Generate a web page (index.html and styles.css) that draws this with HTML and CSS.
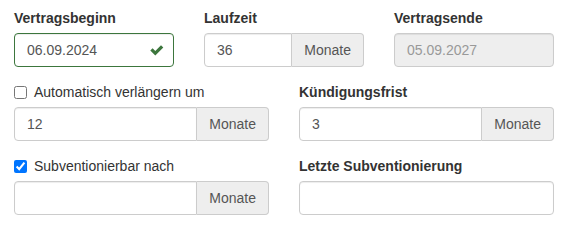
FILE: index.html
```html
<!DOCTYPE html>
<html lang="de">
<head>
<meta charset="utf-8">
<link rel="stylesheet" href="styles.css">
</head>
<body>
<form class="form">
  <div class="row row-3">
    <div class="group">
      <label class="label">Vertragsbeginn</label>
      <div class="field-wrap">
        <input class="control control-success" type="text" value="06.09.2024">
        <svg class="feedback" width="14" height="11" viewBox="0 0 14 11" aria-hidden="true">
          <path d="M0.3 5.6 L2.6 3.3 L5.3 6 L11 0.3 L13.3 2.6 L5.3 10.6 Z" fill="#3c763d"/>
        </svg>
      </div>
    </div>
    <div class="group">
      <label class="label">Laufzeit</label>
      <div class="input-group">
        <input class="control control-left" type="text" value="36">
        <span class="addon">Monate</span>
      </div>
    </div>
    <div class="group">
      <label class="label">Vertragsende</label>
      <input class="control control-disabled" type="text" value="05.09.2027" disabled>
    </div>
  </div>
  <div class="row row-2">
    <div class="group">
      <label class="check-label"><input class="check" type="checkbox"> Automatisch verlängern um</label>
      <div class="input-group">
        <input class="control control-left" type="text" value="12">
        <span class="addon">Monate</span>
      </div>
    </div>
    <div class="group">
      <label class="label">Kündigungsfrist</label>
      <div class="input-group">
        <input class="control control-left" type="text" value="3">
        <span class="addon">Monate</span>
      </div>
    </div>
  </div>
  <div class="row row-2">
    <div class="group">
      <label class="check-label"><input class="check" type="checkbox" checked> Subventionierbar nach</label>
      <div class="input-group">
        <input class="control control-left" type="text" value="">
        <span class="addon">Monate</span>
      </div>
    </div>
    <div class="group">
      <label class="label">Letzte Subventionierung</label>
      <input class="control" type="text" value="">
    </div>
  </div>
</form>
</body>
</html>
```
FILE: styles.css
```css
* { box-sizing: border-box; }
html, body { margin: 0; padding: 0; background: #fff; }
body {
  font-family: "Liberation Sans", Arial, sans-serif;
  font-size: 14px;
  line-height: 20px;
  color: #333;
}
.form {
  width: 540px;
  margin: 8px 0 0 14px;
}
.row {
  display: grid;
  column-gap: 30px;
}
.row-3 { grid-template-columns: repeat(3, 1fr); }
.row-2 { grid-template-columns: repeat(2, 1fr); }
.group {
  margin-bottom: 15px;
  min-width: 0;
}
.label {
  display: block;
  font-weight: 700;
  margin-bottom: 5px;
  height: 20px;
}
.check-label {
  display: flex;
  align-items: center;
  font-weight: 400;
  margin-bottom: 5px;
  height: 20px;
}
.check {
  width: 13px;
  height: 13px;
  margin: 0 7px 0 0;
  accent-color: #0075ff;
}
.field-wrap { position: relative; }
.control {
  display: block;
  width: 100%;
  height: 34px;
  padding: 6px 12px;
  font-family: inherit;
  font-size: 14px;
  line-height: 20px;
  color: #555;
  background: #fff;
  border: 1px solid #ccc;
  border-radius: 4px;
  box-shadow: inset 0 1px 1px rgba(0,0,0,.075);
  outline: none;
}
.control-success {
  border-color: #3c763d;
  padding-right: 42px;
}
.control-disabled {
  background: #eee;
  color: #999;
  opacity: 1;
}
.feedback {
  position: absolute;
  right: 10px;
  top: 12px;
}
.input-group {
  display: flex;
}
.control-left {
  flex: 1;
  min-width: 0;
  border-radius: 4px 0 0 4px;
}
.addon {
  display: flex;
  align-items: center;
  height: 34px;
  padding: 6px 12px;
  color: #555;
  background: #eee;
  border: 1px solid #ccc;
  border-left: 0;
  border-radius: 0 4px 4px 0;
  white-space: nowrap;
}
```
